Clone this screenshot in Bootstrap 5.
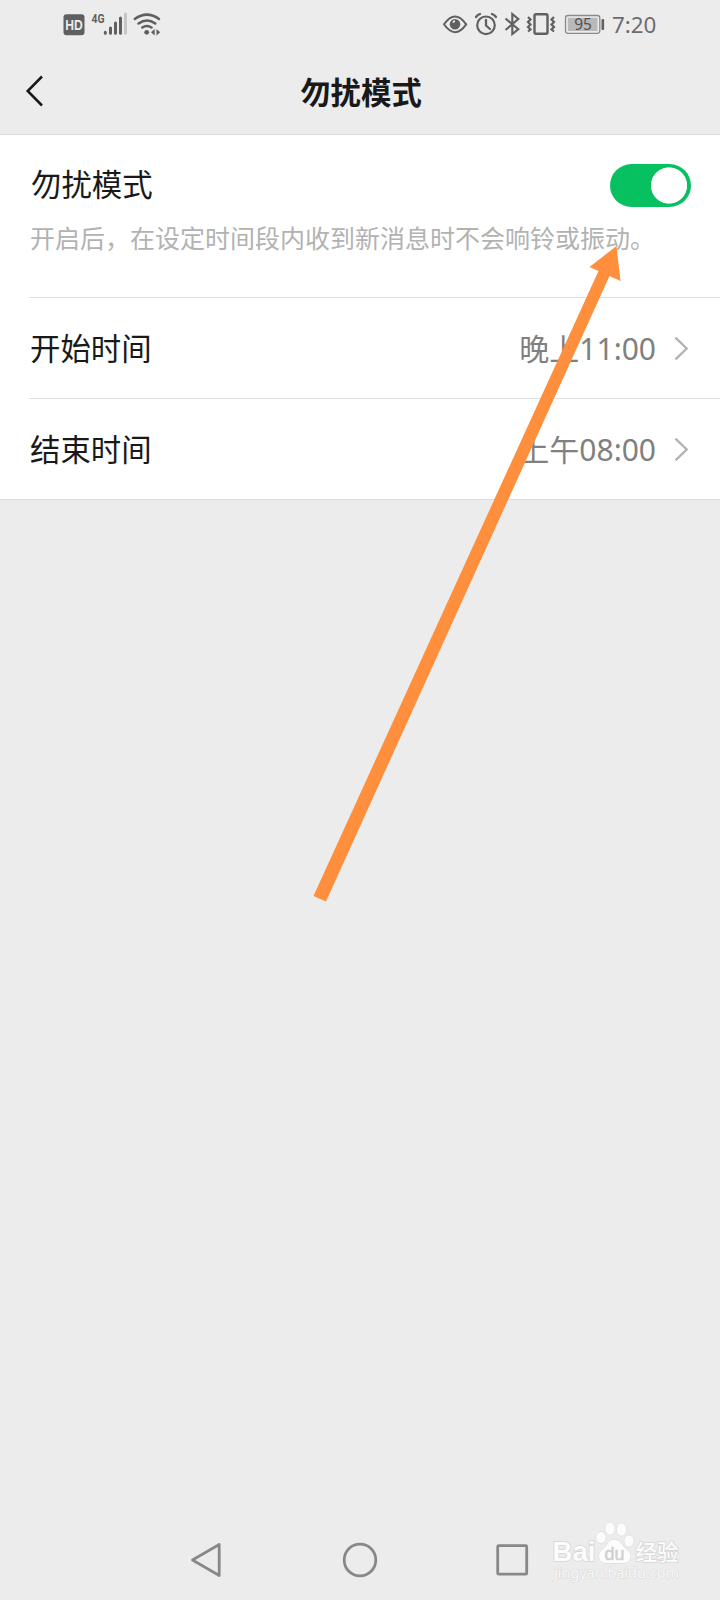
<!DOCTYPE html>
<html lang="zh-CN">
<head>
<meta charset="utf-8">
<meta name="viewport" content="width=device-width, initial-scale=1">
<title>勿扰模式</title>
<link href="https://cdn.jsdelivr.net/npm/bootstrap@5.3.0/dist/css/bootstrap.min.css" rel="stylesheet">
<script src="https://cdn.jsdelivr.net/npm/bootstrap@5.3.0/dist/js/bootstrap.bundle.min.js"></script>
<style>
  body { background: #ececec; color: #191919; font-family: "Noto Sans", "Noto Sans CJK SC", sans-serif; }
  .screen { width: 720px; height: 1600px; overflow: hidden; }
  .statusbar { height: 50px; padding: 0 64px 0 63px; }
  .statusbar svg, .navkeys svg { display: block; }
  .clock { font-size: 22.4px; line-height: 50px; color: #6c6c6c; width: 44px; white-space: nowrap; }
  .titlebar { height: 85px; padding: 1px 0 0 2px; border-bottom: 1px solid #d9d9d9; }
  .titlebar h1 { font-size: 30.4px; line-height: 40px; font-weight: 700; }
  .back { left: 25px; top: 25px; }
  .label-text { font-size: 30.4px; line-height: 40px; white-space: nowrap; }
  .intro { height: 162px; padding: 29px 29px 0 30px; }
  .intro .label-text { padding: 1px 0 0 1px; }
  .hint { font-size: 25px; line-height: 32px; color: #b2b2b2; margin-top: 15px; white-space: nowrap; }
  .setting { height: 101px; margin-left: 29px; padding: 1px 31px 0 1px; border-top: 1px solid #e0e0e0; }
  .value-text { font-size: 30px; line-height: 40px; color: #808080; margin-right: 18px; }
  .panel { border-bottom: 1px solid #dedede; }
  .switch.form-check-input { width: 81px; height: 43px; margin: 0; border: 0; box-shadow: none;
    background: #07c160 radial-gradient(circle at 59px 21.5px, #fff 17.7px, transparent 18.5px) no-repeat; }
  .navkeys { height: 80px; padding-left: 190px; }
  .arrow { left: 0; top: 0; pointer-events: none; }
  .watermark { left: 548px; top: 1518px; }
</style>
</head>
<body>
<div class="screen position-relative d-flex flex-column">
  <header>
    <div class="statusbar d-flex justify-content-between align-items-center">
      <svg width="100" height="50" viewBox="63 0 100 50">
        <rect x="63.5" y="14.3" width="21" height="21" rx="3" fill="#5f5f5f"/>
        <text x="74" y="30.2" text-anchor="middle" textLength="17.5" lengthAdjust="spacingAndGlyphs" font-family="Liberation Sans" font-weight="700" font-size="14.500" fill="#ececec">HD</text>
        <text x="91.5" y="22.7" textLength="13" lengthAdjust="spacingAndGlyphs" font-family="Roboto" font-weight="700" font-size="13" fill="#5f5f5f">4G</text>
        <g stroke-width="3" stroke-linecap="round" stroke="#5f5f5f">
          <path d="M105.3 32.3v1M110.5 28v5.3M115.5 23v10.3M120.5 18v15.3"/>
          <path d="M125.5 14v19.3" stroke="#c6c6c6"/>
        </g>
        <g fill="none" stroke="#5f5f5f" stroke-width="2.5" stroke-linecap="round">
          <path d="M134.8 19Q147 10.3 159 19M138.5 23.5Q147 17.500 155.3 23.5M142.3 27.5Q147 24.400 151.5 27.5"/>
        </g>
        <circle cx="146.7" cy="32.3" r="2.4" fill="#5f5f5f"/>
        <path d="M154.7 29v6.500l-3.700-3.250zM156.500 29v6.500l3.700-3.250z" fill="#5f5f5f"/>
      </svg>
      <div class="d-flex align-items-center">
        <svg width="170" height="50" viewBox="442 0 170 50" fill="none" stroke="#606060">
          <path d="M444 24.300Q455 8.500 466.200 24.300Q455 40 444 24.300Z" stroke-width="2"/>
          <circle cx="455" cy="24.200" r="5.300" fill="#606060" stroke="none"/>
          <path d="M453.200 22.800a1.800 1.800 0 0 1 1.800-1.700" stroke="#ececec" stroke-width="1.600"/>
          <circle cx="486" cy="25.300" r="8.800" stroke-width="2.200"/>
          <path d="M486 20v5.500l4 3.500M476 17q1.500-2.200 4-3M496 17q-1.500-2.200-4-3" stroke-width="2.300" stroke-linecap="round"/>
          <path d="M505.500 18.500L518.300 29.200L512.300 34V14L518.300 19L505.500 30" stroke-width="2.100"/>
          <rect x="534.500" y="14.200" width="13" height="19.600" rx="1.500" stroke-width="2.400"/>
          <path d="M528 17l2.500 2.500-2.500 2.500 2.500 2.500-2.500 2.500 2.500 2.500-2.500 2M554 17l-2.500 2.500 2.500 2.500-2.500 2.500 2.500 2.500-2.500 2.500 2.500 2" stroke-width="2.200"/>
          <rect x="565.500" y="15.500" width="34.300" height="17.800" rx="2.500" stroke="#8a8a8a" stroke-width="1.300"/>
          <rect x="567.800" y="17.800" width="29.700" height="13.200" fill="#b9b9b9" stroke="none"/>
          <rect x="601.500" y="19" width="2.600" height="11" rx="1" fill="#606060" stroke="none"/>
          <text x="583" y="30" text-anchor="middle" font-family="Noto Sans" font-size="15.500" fill="#505050" stroke="none">95</text>
        </svg>
        <div class="clock">7:20</div>
      </div>
    </div>
    <div class="titlebar position-relative d-flex align-items-center justify-content-center">
      <svg class="back position-absolute" width="20" height="34" viewBox="0 0 20 34" fill="none" stroke="#191919" stroke-width="2.500"><path d="M17 1.500L2.700 16L17 30.500"/></svg>
      <h1 class="m-0">勿扰模式</h1>
    </div>
  </header>

  <main class="panel bg-white">
    <section class="intro">
      <div class="d-flex justify-content-between align-items-start">
        <label class="label-text" for="dnd">勿扰模式</label>
        <input class="switch form-check-input rounded-pill" type="checkbox" role="switch" id="dnd" checked>
      </div>
      <p class="hint mb-0">开启后，在设定时间段内收到新消息时不会响铃或振动。</p>
    </section>
    <div class="setting d-flex align-items-center">
      <span class="label-text me-auto">开始时间</span>
      <span class="value-text">晚上11:00</span>
      <svg width="15" height="26" viewBox="0 0 15 26" fill="none" stroke="#b2b2b2" stroke-width="2.300"><path d="M1.500 1.700L12.700 12.500L1.500 23.300"/></svg>
    </div>
    <div class="setting d-flex align-items-center">
      <span class="label-text me-auto">结束时间</span>
      <span class="value-text">上午08:00</span>
      <svg width="15" height="26" viewBox="0 0 15 26" fill="none" stroke="#b2b2b2" stroke-width="2.300"><path d="M1.500 1.700L12.700 12.500L1.500 23.300"/></svg>
    </div>
  </main>

  <nav class="navkeys mt-auto">
    <svg width="340" height="80" viewBox="190 1520 340 80" fill="none" stroke="#888" stroke-width="2.800" stroke-linejoin="round">
      <path d="M219.200 1544.500V1575.500L192.500 1560Z"/>
      <circle cx="360" cy="1560" r="15.800"/>
      <rect x="497.700" y="1545.700" width="29" height="28.500" rx="1"/>
    </svg>
  </nav>

  <svg class="arrow position-absolute" width="720" height="1600" viewBox="0 0 720 1600">
    <path d="M616.500 246L620.500 281L609.500 276L326 901.500L313.500 896L598.500 271L589.500 267Z" fill="#ff8f3c"/>
  </svg>

  <svg class="watermark position-absolute" width="140" height="66" viewBox="548 1518 140 66" fill="#fcfcfc" stroke="#d6d6d6" stroke-width="1" paint-order="stroke">
    <text x="552.500" y="1561" textLength="43" lengthAdjust="spacingAndGlyphs" font-family="Liberation Sans" font-weight="700" font-size="28" stroke-width="1.600">Bai</text>
    <ellipse cx="601" cy="1537.500" rx="4.700" ry="5.800"/>
    <ellipse cx="610" cy="1528.500" rx="4.700" ry="6.200"/>
    <ellipse cx="621.500" cy="1529.500" rx="4.900" ry="6.300"/>
    <ellipse cx="629" cy="1541" rx="4.700" ry="5.800"/>
    <path d="M614 1539.500c5 0 7 4 10 7.500s7 5 6.500 10-4 6-8 6h-16c-4 0-7.500-2-7.500-6.500 0-5 4-7 6.500-10s4-7 8.500-7Z"/>
    <text x="614.500" y="1560" text-anchor="middle" textLength="20" lengthAdjust="spacingAndGlyphs" font-family="Liberation Sans" font-size="19" fill="#cfcfcf" stroke="#cfcfcf" stroke-width=".5">du</text>
    <text x="635.500" y="1560" textLength="43" lengthAdjust="spacingAndGlyphs" font-family="Noto Sans CJK SC" font-weight="500" font-size="21.500" stroke-width="1.600">经验</text>
    <text x="554" y="1578" textLength="125" lengthAdjust="spacingAndGlyphs" font-family="Noto Sans" font-size="13.500" fill="#f8f8f8" stroke="#dadada" stroke-width="1">jingyan.baidu.com</text>
  </svg>
</div>
</body>
</html>
